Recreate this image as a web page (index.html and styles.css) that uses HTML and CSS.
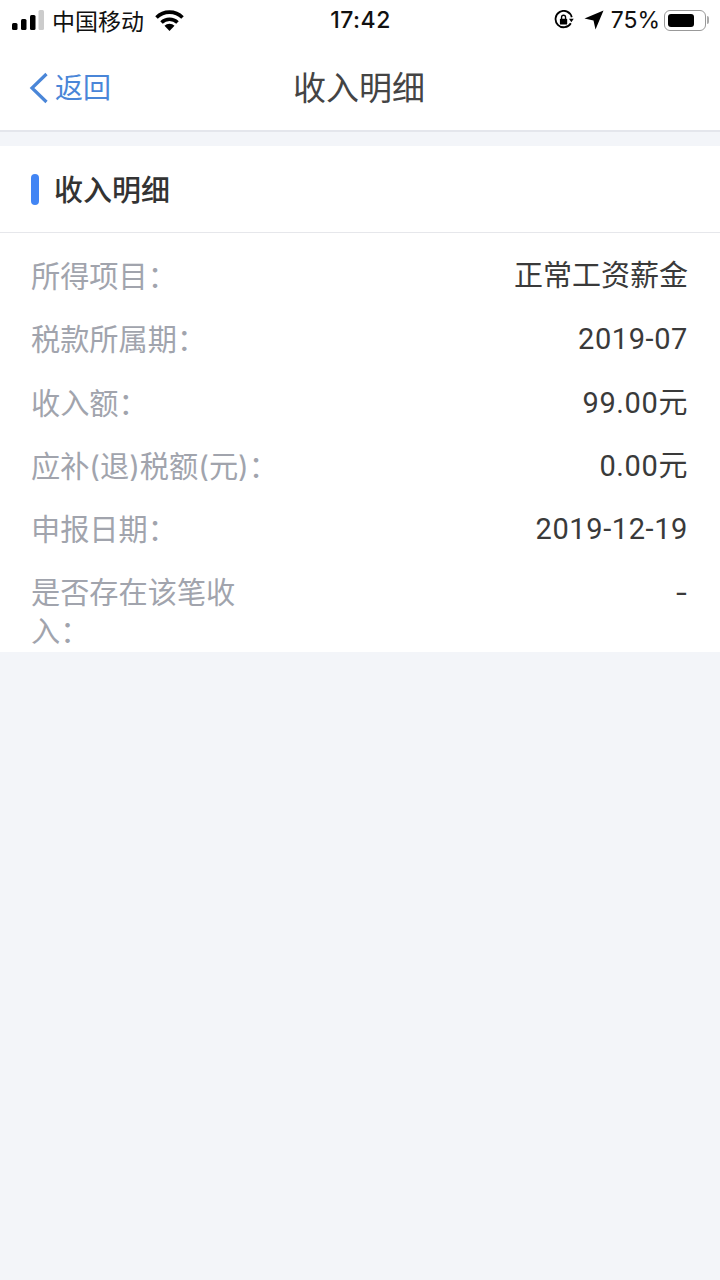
FILE: index.html
```html
<!DOCTYPE html>
<html lang="zh-CN">
<head>
  <meta charset="UTF-8">
  <title>收入明细</title>
  <meta name="viewport" content="width=device-width, initial-scale=1.0">
  <link rel="stylesheet" href="styles.css">
</head>
<body>
  <div class="status">
    <div class="status-left">
      <svg class="signal" width="32" height="20" viewBox="0 0 32 20">
        <rect x="0" y="13" width="5.5" height="7" rx="1.5" fill="#000"/>
        <rect x="9" y="9" width="5.5" height="11" rx="1.5" fill="#000"/>
        <rect x="18" y="5" width="5.5" height="15" rx="1.5" fill="#000"/>
        <rect x="26.5" y="0" width="5.5" height="20" rx="1.5" fill="#ccc"/>
      </svg>
      <span class="carrier">中国移动</span>
      <svg class="wifi" width="29" height="21" viewBox="0 0 29 21">
        <path d="M1.5 7.5a18.5 18.5 0 0 1 26 0" fill="none" stroke="#000" stroke-width="3.6"/>
        <path d="M6.5 12.5a11.5 11.5 0 0 1 16 0" fill="none" stroke="#000" stroke-width="3.6"/>
        <path d="M14.5 21l-5-5.2a7 7 0 0 1 10 0z" fill="#000"/>
      </svg>
    </div>
    <div class="clock">17:42</div>
    <div class="status-right">
      <svg width="20" height="20" viewBox="0 0 22 22">
        <path d="M18.5 14.5A9 9 0 1 1 19.5 8" fill="none" stroke="#000" stroke-width="2"/>
        <path d="M16.5 9.5l5.2 0-2.6 4z" fill="#000"/>
        <rect x="6.5" y="9.5" width="8" height="6.5" rx="1" fill="#000"/>
        <path d="M8.3 10V8a2.2 2.2 0 0 1 4.4 0v2" fill="none" stroke="#000" stroke-width="1.5"/>
      </svg>
      <svg class="arrow" width="20" height="20" viewBox="0 0 20 20">
        <path d="M19.5 .5L11.5 19.5 9.5 10.5 .5 8.5z" fill="#000"/>
      </svg>
      <span class="percent">75%</span>
      <div class="battery"><div class="battery-fill"></div></div>
      <div class="battery-cap"></div>
    </div>
  </div>

  <div class="nav">
    <div class="back">
      <svg width="20" height="32" viewBox="0 0 20 32">
        <path d="M17.5 2L3 16l14.5 14" fill="none" stroke="#4a86d8" stroke-width="3.2"/>
      </svg>
      <span>返回</span>
    </div>
    <div class="nav-title">收入明细</div>
  </div>

  <div class="card">
    <div class="card-head">
      <span class="mark"></span>
      <span class="card-title">收入明细</span>
    </div>
    <div class="rows">
      <div class="row"><div class="label">所得项目：</div><div class="value">正常工资薪金</div></div>
      <div class="row"><div class="label">税款所属期：</div><div class="value">2019-07</div></div>
      <div class="row"><div class="label">收入额：</div><div class="value">99.00元</div></div>
      <div class="row"><div class="label">应补(退)税额(元)：</div><div class="value">0.00元</div></div>
      <div class="row"><div class="label">申报日期：</div><div class="value">2019-12-19</div></div>
      <div class="row"><div class="label">是否存在该笔收入：</div><div class="value">-</div></div>
    </div>
  </div>
</body>
</html>
```

FILE: styles.css
```css
* {
  box-sizing: border-box;
}
body {
  margin: 0;
  min-height: 1280px;
  background: #f3f5f9;
  color: #333;
  font-family: "Inter", "Noto Sans CJK SC", sans-serif;
}
.status {
  display: flex;
  justify-content: space-between;
  align-items: center;
  height: 40px;
  padding: 0 11px 0 12px;
  background: #fff;
  color: #111;
}
.status-left {
  display: flex;
  align-items: center;
  width: 250px;
}
.carrier {
  margin-left: 8px;
  font-size: 23px;
}
.wifi {
  margin-left: 11px;
}
.clock {
  font-size: 23px;
  font-weight: 500;
  letter-spacing: 0.5px;
}
.status-right {
  display: flex;
  align-items: center;
  justify-content: flex-end;
  width: 250px;
}
.arrow {
  margin-left: 10px;
}
.percent {
  margin-left: 7px;
  font-size: 23px;
}
.battery {
  width: 42px;
  height: 21px;
  margin-left: 4px;
  padding: 3px;
  border: 1.5px solid #999;
  border-radius: 6px;
}
.battery-fill {
  width: 26px;
  height: 100%;
  background: #000;
  border-radius: 3px;
}
.battery-cap {
  width: 2px;
  height: 8px;
  margin-left: 1px;
  background: #aaa;
  border-radius: 0 2px 2px 0;
}
.nav {
  position: relative;
  display: flex;
  align-items: center;
  justify-content: center;
  height: 92px;
  padding: 2px 2px 0 0;
  background: #fff;
  border-bottom: 2px solid #e4e6ec;
}
.back {
  position: absolute;
  left: 29px;
  top: 30px;
  display: flex;
  align-items: center;
  color: #4a86d8;
  font-size: 28px;
  line-height: 36px;
}
.back span {
  margin-left: 6px;
}
.nav-title {
  font-size: 33px;
  color: #444;
}
.card {
  margin-top: 14px;
  background: #fff;
}
.card-head {
  display: flex;
  align-items: center;
  height: 87px;
  padding-left: 31px;
  border-bottom: 1px solid #e6e7eb;
}
.mark {
  width: 8px;
  height: 31px;
  background: #4285f4;
  border-radius: 4px;
}
.card-title {
  margin-left: 15px;
  padding-bottom: 2px;
  font-size: 29px;
  font-weight: 500;
  color: #333;
}
.rows {
  padding: 24px 32px 1px 31px;
}
.row {
  display: flex;
  justify-content: space-between;
  margin-bottom: 24.3px;
  font-size: 29.2px;
  line-height: 39px;
}
.row:last-child {
  margin-bottom: 0;
}
.label {
  width: 216px;
  color: #a1a4ad;
}
.row:nth-child(4) .label {
  width: 240px;
  white-space: nowrap;
}
.value {
  text-align: right;
  color: #3a3a3a;
  font-family: "Roboto", "Noto Sans CJK SC", sans-serif;
  font-size: 29px;
  letter-spacing: 0.6px;
}
.row:first-child .value {
  letter-spacing: 0;
}
.row:last-child .value {
  font-family: "Inter", sans-serif;
  letter-spacing: 0;
}
```
